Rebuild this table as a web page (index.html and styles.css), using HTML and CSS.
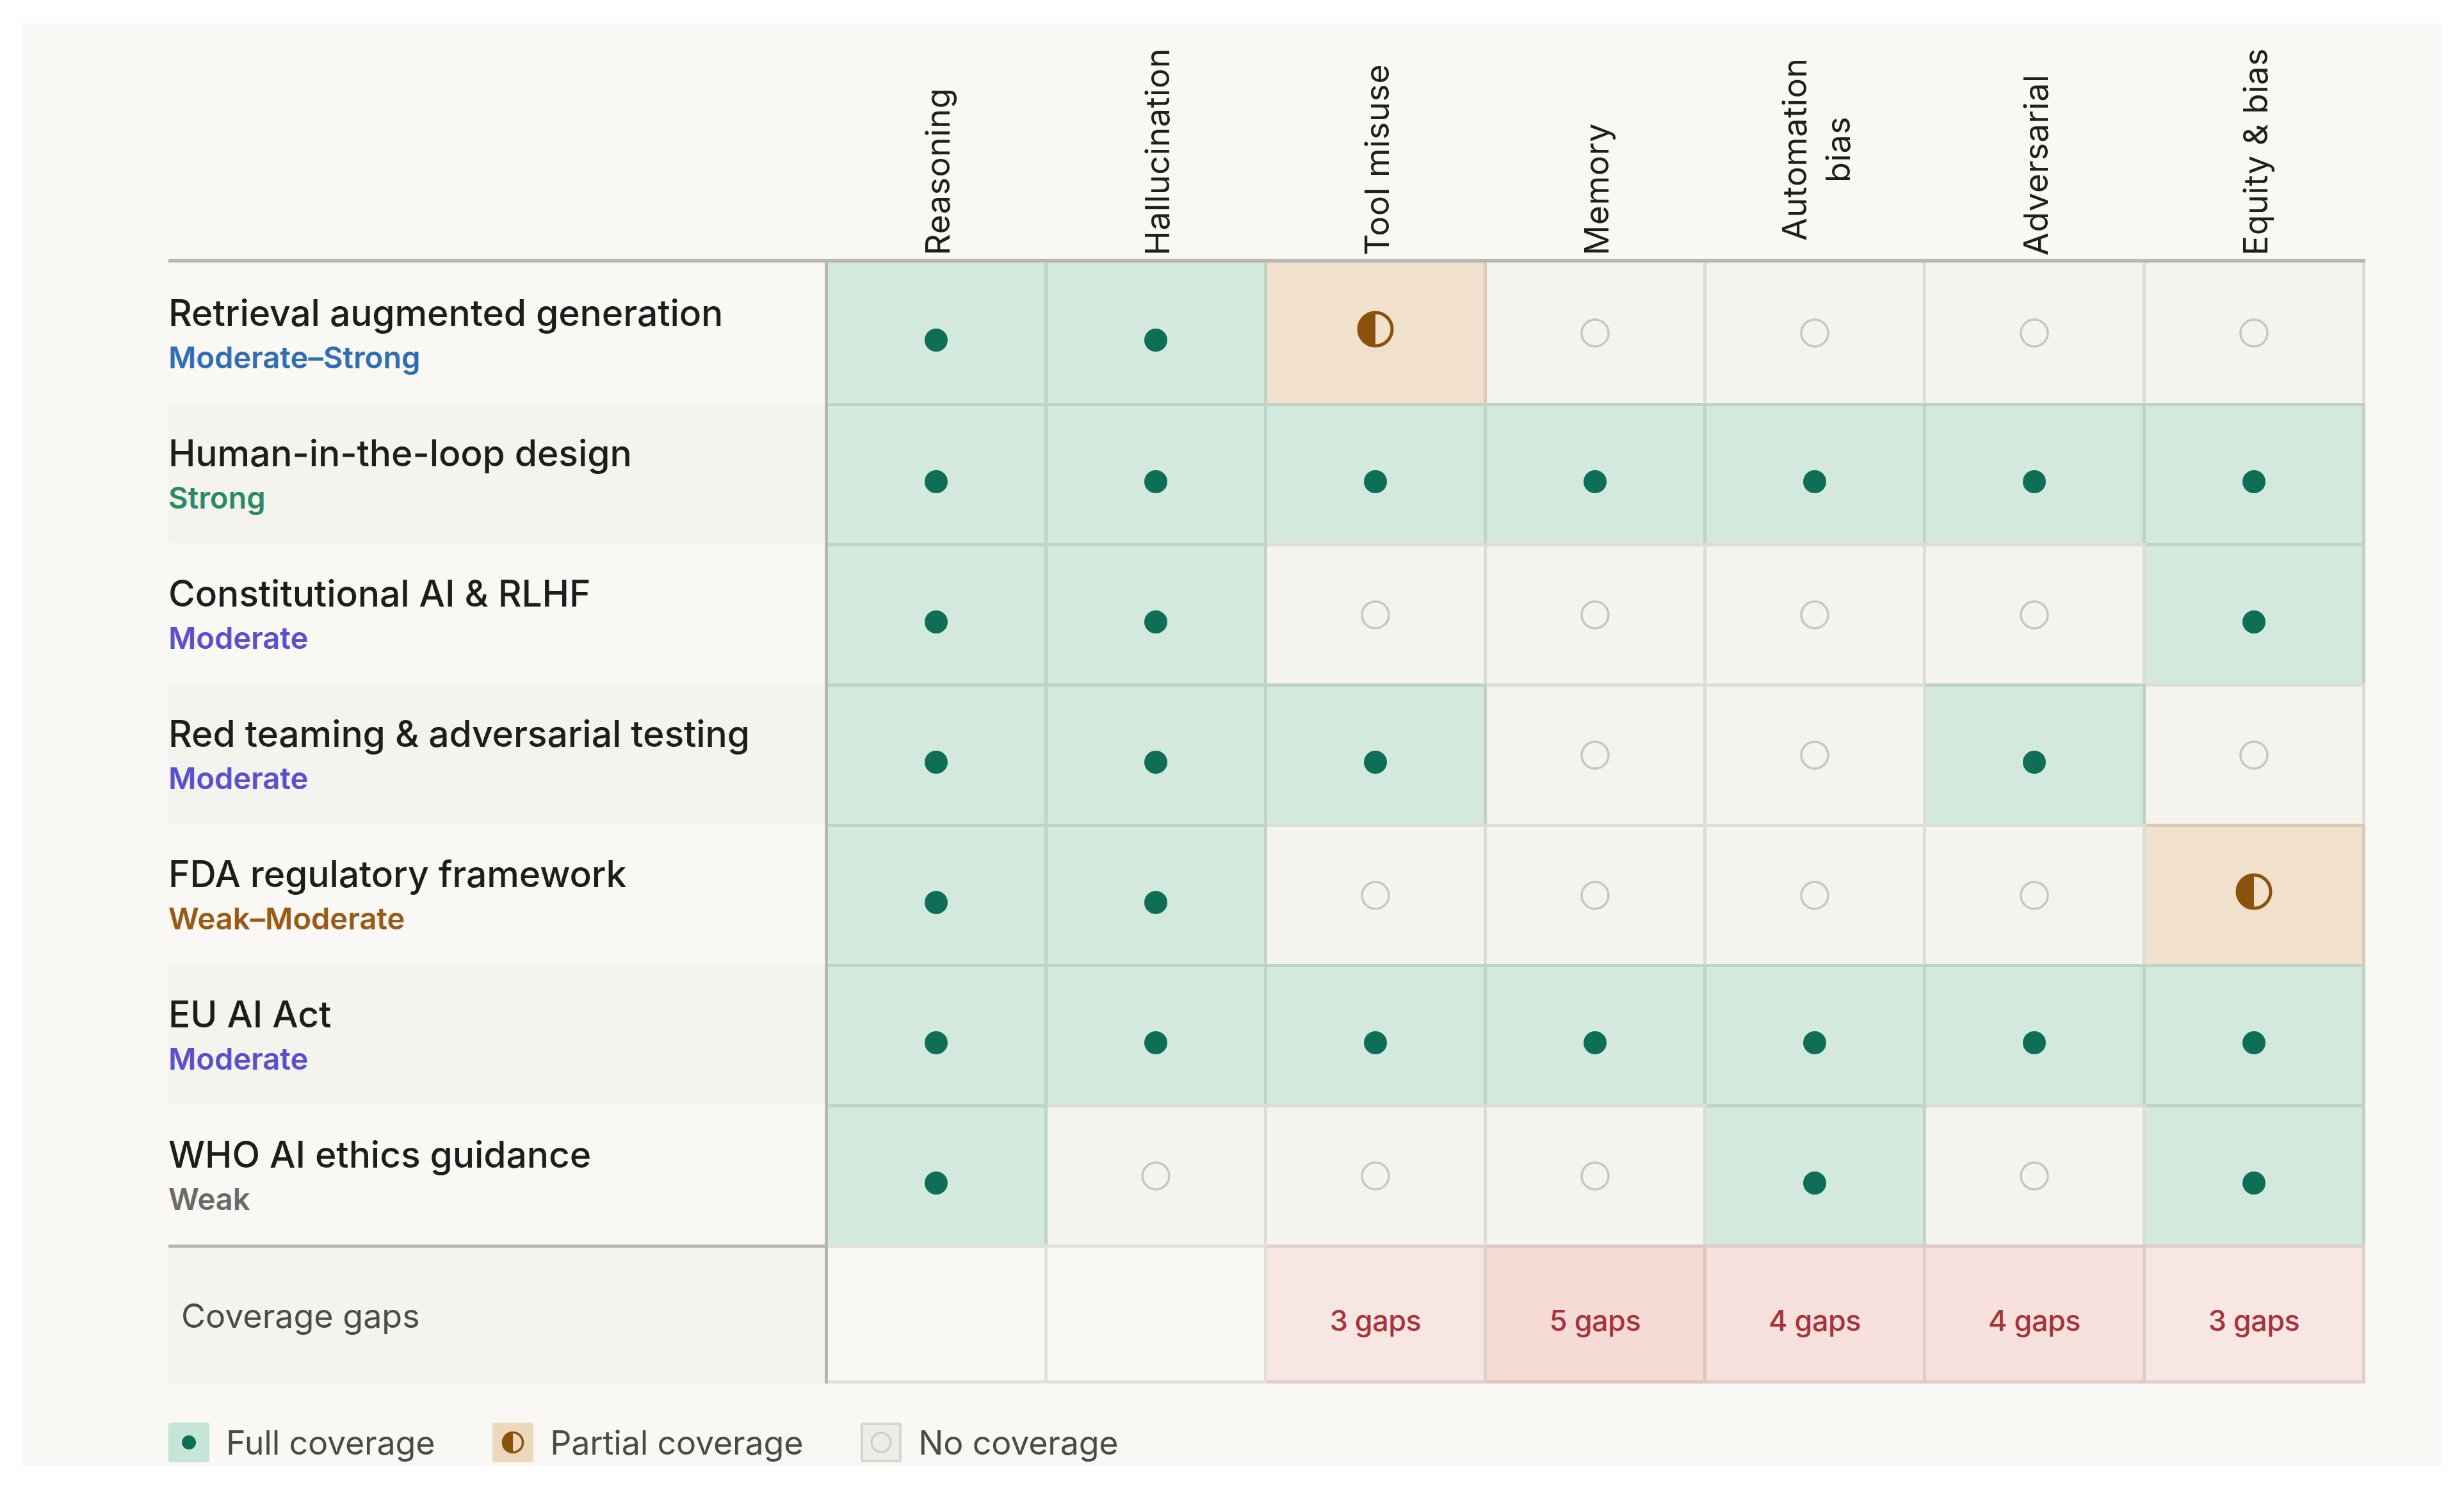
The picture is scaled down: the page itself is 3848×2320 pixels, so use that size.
FILE: index.html
```html
<!DOCTYPE html>
<html lang="en">
<head>
<meta charset="utf-8">
<title>Safeguard coverage matrix</title>
<link rel="stylesheet" href="styles.css">
</head>
<body>
<div class="card">
  <div class="head">
    <div class="hcell corner"></div>
    <div class="hcell"><span class="vlabel">Reasoning</span></div>
    <div class="hcell"><span class="vlabel">Hallucination</span></div>
    <div class="hcell"><span class="vlabel">Tool misuse</span></div>
    <div class="hcell"><span class="vlabel">Memory</span></div>
    <div class="hcell"><span class="vlabel">Automation bias</span></div>
    <div class="hcell"><span class="vlabel">Adversarial</span></div>
    <div class="hcell"><span class="vlabel">Equity &amp; bias</span></div>
  </div>

  <div class="row first">
    <div class="label"><div class="title">Retrieval augmented generation</div><div class="rating r-modstrong">Moderate–Strong</div></div>
    <div class="cell full"><svg class="dot" viewBox="0 0 36 36"><circle cx="18" cy="18" r="18"/></svg></div>
    <div class="cell full"><svg class="dot" viewBox="0 0 36 36"><circle cx="18" cy="18" r="18"/></svg></div>
    <div class="cell part"><svg class="half" viewBox="0 0 58 58"><circle cx="29" cy="29" r="26"/><path d="M29 3 A26 26 0 0 0 29 55 Z"/></svg></div>
    <div class="cell none"><svg class="ring" viewBox="0 0 46 46"><circle cx="23" cy="23" r="21"/></svg></div>
    <div class="cell none"><svg class="ring" viewBox="0 0 46 46"><circle cx="23" cy="23" r="21"/></svg></div>
    <div class="cell none"><svg class="ring" viewBox="0 0 46 46"><circle cx="23" cy="23" r="21"/></svg></div>
    <div class="cell none"><svg class="ring" viewBox="0 0 46 46"><circle cx="23" cy="23" r="21"/></svg></div>
  </div>

  <div class="row alt">
    <div class="label"><div class="title">Human-in-the-loop design</div><div class="rating r-strong">Strong</div></div>
    <div class="cell full"><svg class="dot" viewBox="0 0 36 36"><circle cx="18" cy="18" r="18"/></svg></div>
    <div class="cell full"><svg class="dot" viewBox="0 0 36 36"><circle cx="18" cy="18" r="18"/></svg></div>
    <div class="cell full"><svg class="dot" viewBox="0 0 36 36"><circle cx="18" cy="18" r="18"/></svg></div>
    <div class="cell full"><svg class="dot" viewBox="0 0 36 36"><circle cx="18" cy="18" r="18"/></svg></div>
    <div class="cell full"><svg class="dot" viewBox="0 0 36 36"><circle cx="18" cy="18" r="18"/></svg></div>
    <div class="cell full"><svg class="dot" viewBox="0 0 36 36"><circle cx="18" cy="18" r="18"/></svg></div>
    <div class="cell full"><svg class="dot" viewBox="0 0 36 36"><circle cx="18" cy="18" r="18"/></svg></div>
  </div>

  <div class="row">
    <div class="label"><div class="title">Constitutional AI &amp; RLHF</div><div class="rating r-mod">Moderate</div></div>
    <div class="cell full"><svg class="dot" viewBox="0 0 36 36"><circle cx="18" cy="18" r="18"/></svg></div>
    <div class="cell full"><svg class="dot" viewBox="0 0 36 36"><circle cx="18" cy="18" r="18"/></svg></div>
    <div class="cell none"><svg class="ring" viewBox="0 0 46 46"><circle cx="23" cy="23" r="21"/></svg></div>
    <div class="cell none"><svg class="ring" viewBox="0 0 46 46"><circle cx="23" cy="23" r="21"/></svg></div>
    <div class="cell none"><svg class="ring" viewBox="0 0 46 46"><circle cx="23" cy="23" r="21"/></svg></div>
    <div class="cell none"><svg class="ring" viewBox="0 0 46 46"><circle cx="23" cy="23" r="21"/></svg></div>
    <div class="cell full"><svg class="dot" viewBox="0 0 36 36"><circle cx="18" cy="18" r="18"/></svg></div>
  </div>

  <div class="row alt">
    <div class="label"><div class="title">Red teaming &amp; adversarial testing</div><div class="rating r-mod">Moderate</div></div>
    <div class="cell full"><svg class="dot" viewBox="0 0 36 36"><circle cx="18" cy="18" r="18"/></svg></div>
    <div class="cell full"><svg class="dot" viewBox="0 0 36 36"><circle cx="18" cy="18" r="18"/></svg></div>
    <div class="cell full"><svg class="dot" viewBox="0 0 36 36"><circle cx="18" cy="18" r="18"/></svg></div>
    <div class="cell none"><svg class="ring" viewBox="0 0 46 46"><circle cx="23" cy="23" r="21"/></svg></div>
    <div class="cell none"><svg class="ring" viewBox="0 0 46 46"><circle cx="23" cy="23" r="21"/></svg></div>
    <div class="cell full"><svg class="dot" viewBox="0 0 36 36"><circle cx="18" cy="18" r="18"/></svg></div>
    <div class="cell none"><svg class="ring" viewBox="0 0 46 46"><circle cx="23" cy="23" r="21"/></svg></div>
  </div>

  <div class="row">
    <div class="label"><div class="title">FDA regulatory framework</div><div class="rating r-weakmod">Weak–Moderate</div></div>
    <div class="cell full"><svg class="dot" viewBox="0 0 36 36"><circle cx="18" cy="18" r="18"/></svg></div>
    <div class="cell full"><svg class="dot" viewBox="0 0 36 36"><circle cx="18" cy="18" r="18"/></svg></div>
    <div class="cell none"><svg class="ring" viewBox="0 0 46 46"><circle cx="23" cy="23" r="21"/></svg></div>
    <div class="cell none"><svg class="ring" viewBox="0 0 46 46"><circle cx="23" cy="23" r="21"/></svg></div>
    <div class="cell none"><svg class="ring" viewBox="0 0 46 46"><circle cx="23" cy="23" r="21"/></svg></div>
    <div class="cell none"><svg class="ring" viewBox="0 0 46 46"><circle cx="23" cy="23" r="21"/></svg></div>
    <div class="cell part"><svg class="half" viewBox="0 0 58 58"><circle cx="29" cy="29" r="26"/><path d="M29 3 A26 26 0 0 0 29 55 Z"/></svg></div>
  </div>

  <div class="row alt">
    <div class="label"><div class="title">EU AI Act</div><div class="rating r-mod">Moderate</div></div>
    <div class="cell full"><svg class="dot" viewBox="0 0 36 36"><circle cx="18" cy="18" r="18"/></svg></div>
    <div class="cell full"><svg class="dot" viewBox="0 0 36 36"><circle cx="18" cy="18" r="18"/></svg></div>
    <div class="cell full"><svg class="dot" viewBox="0 0 36 36"><circle cx="18" cy="18" r="18"/></svg></div>
    <div class="cell full"><svg class="dot" viewBox="0 0 36 36"><circle cx="18" cy="18" r="18"/></svg></div>
    <div class="cell full"><svg class="dot" viewBox="0 0 36 36"><circle cx="18" cy="18" r="18"/></svg></div>
    <div class="cell full"><svg class="dot" viewBox="0 0 36 36"><circle cx="18" cy="18" r="18"/></svg></div>
    <div class="cell full"><svg class="dot" viewBox="0 0 36 36"><circle cx="18" cy="18" r="18"/></svg></div>
  </div>

  <div class="row">
    <div class="label"><div class="title">WHO AI ethics guidance</div><div class="rating r-weak">Weak</div></div>
    <div class="cell full"><svg class="dot" viewBox="0 0 36 36"><circle cx="18" cy="18" r="18"/></svg></div>
    <div class="cell none"><svg class="ring" viewBox="0 0 46 46"><circle cx="23" cy="23" r="21"/></svg></div>
    <div class="cell none"><svg class="ring" viewBox="0 0 46 46"><circle cx="23" cy="23" r="21"/></svg></div>
    <div class="cell none"><svg class="ring" viewBox="0 0 46 46"><circle cx="23" cy="23" r="21"/></svg></div>
    <div class="cell full"><svg class="dot" viewBox="0 0 36 36"><circle cx="18" cy="18" r="18"/></svg></div>
    <div class="cell none"><svg class="ring" viewBox="0 0 46 46"><circle cx="23" cy="23" r="21"/></svg></div>
    <div class="cell full"><svg class="dot" viewBox="0 0 36 36"><circle cx="18" cy="18" r="18"/></svg></div>
  </div>

  <div class="row gaps">
    <div class="label gaps-label">Coverage gaps</div>
    <div class="gcell"></div>
    <div class="gcell"></div>
    <div class="gcell g3">3 gaps</div>
    <div class="gcell g5">5 gaps</div>
    <div class="gcell g4">4 gaps</div>
    <div class="gcell g4">4 gaps</div>
    <div class="gcell g3">3 gaps</div>
  </div>

  <div class="legend">
    <div class="litem">
      <span class="swatch sw-full"><svg viewBox="0 0 22 22" class="sw-dot"><circle cx="11" cy="11" r="11"/></svg></span>
      <span class="ltext">Full coverage</span>
    </div>
    <div class="litem">
      <span class="swatch sw-part"><svg viewBox="0 0 36 36" class="sw-half"><circle cx="18" cy="18" r="15.5"/><path d="M18 2.5 A15.5 15.5 0 0 0 18 33.5 Z"/></svg></span>
      <span class="ltext">Partial coverage</span>
    </div>
    <div class="litem">
      <span class="swatch sw-none"><svg viewBox="0 0 34 34" class="sw-ring"><circle cx="17" cy="17" r="15"/></svg></span>
      <span class="ltext">No coverage</span>
    </div>
  </div>
</div>
</body>
</html>
```

FILE: styles.css
```css
* { box-sizing: border-box; }

html, body {
  margin: 0;
  padding: 0;
  background: #ffffff;
}

body {
  font-family: Inter, "Noto Sans", "Liberation Sans", sans-serif;
  color: #1d1d1b;
}

.card {
  margin: 36px 0 0 34px;
  width: 3778px;
  height: 2253px;
  padding: 0 0 0 229px;
  background: #f9f8f4;
}

/* ---------- header ---------- */
.head {
  display: grid;
  grid-template-columns: 1030px repeat(7, 343px);
  width: 3431px;
  height: 374px;
  border-bottom: 6px solid #bbb8b2;
}

.hcell {
  display: flex;
  align-items: flex-end;
  justify-content: center;
  padding-bottom: 5px;
}

.vlabel {
  display: inline-block;
  writing-mode: vertical-rl;
  transform: rotate(180deg);
  max-height: 332px;
  text-align: center;
  font-size: 52px;
  line-height: 1.3;
  letter-spacing: 0.5px;
  font-weight: 400;
  color: #1f1f1d;
}

/* ---------- rows ---------- */
.row {
  display: grid;
  grid-template-columns: 1030px repeat(7, 343px);
  width: 3431px;
  height: 219px;
}

.label {
  display: flex;
  flex-direction: column;
  justify-content: center;
  border-right: 5px solid #b9b6b1;
}

.row.alt .label { background: #f4f3ee; }

.title {
  font-size: 57px;
  line-height: 66px;
  font-weight: 500;
  letter-spacing: -0.1px;
  color: #1d1d1b;
  white-space: nowrap;
}

.rating {
  margin-top: 10px;
  font-size: 47px;
  line-height: 52px;
  font-weight: 600;
  letter-spacing: 0;
}

.r-modstrong { color: #2f6db4; }
.r-strong { color: #2a8a66; }
.r-mod { color: #5a4fcd; }
.r-weakmod { color: #985a14; }
.r-weak { color: #6a6a68; }

.cell {
  display: flex;
  flex-direction: column;
  align-items: center;
  justify-content: center;
  border-top: 5px solid rgba(40, 40, 30, 0.11);
  border-right: 5px solid rgba(40, 40, 30, 0.11);
}

.row.first .cell { border-top: 0; }

.cell.full { background: #d3e9dd; }
.cell.part { background: #f0e0cc; }
.cell.none { background: #f4f3ef; }

.dot {
  width: 36px;
  height: 36px;
  margin-top: 22px;
}
.dot circle { fill: #0f6e56; }

.ring {
  width: 46px;
  height: 46px;
}
.ring circle {
  fill: none;
  stroke: #c8c6c1;
  stroke-width: 3.5;
}

.half {
  width: 58px;
  height: 58px;
  margin-bottom: 12px;
}
.half circle {
  fill: none;
  stroke: #8a520c;
  stroke-width: 5;
}
.half path { fill: #8a520c; }

/* ---------- gaps row ---------- */
.row.gaps { height: 217px; }

.gaps-label {
  background: #f4f3ee;
  border-top: 5px solid #b9b6b1;
  padding-left: 20px;
  font-size: 52px;
  font-weight: 400;
  color: #4b4b49;
}

.gcell {
  display: flex;
  align-items: center;
  justify-content: center;
  padding-top: 20px;
  border-top: 5px solid rgba(40, 40, 30, 0.11);
  border-bottom: 5px solid rgba(40, 40, 30, 0.11);
  border-right: 5px solid rgba(40, 40, 30, 0.11);
  font-size: 45px;
  font-weight: 500;
  letter-spacing: -0.5px;
  color: #a8323a;
}

.gcell.g3 { background: #f8e6e3; }
.gcell.g4 { background: #f7e1dd; }
.gcell.g5 { background: #f5dad6; }

/* ---------- legend ---------- */
.legend {
  display: flex;
  align-items: center;
  gap: 90px;
  margin-top: 61px;
  height: 62px;
}

.litem {
  display: flex;
  align-items: center;
  gap: 26px;
}

.swatch {
  display: flex;
  align-items: center;
  justify-content: center;
  width: 64px;
  height: 62px;
  border-radius: 4px;
}

.sw-full { background: #c5e6d6; }
.sw-part { background: #ecd8bd; }
.sw-none {
  background: #edece8;
  border: 4px solid #d7d5d0;
}

.sw-dot { width: 22px; height: 22px; }
.sw-dot circle { fill: #0f6e56; }

.sw-half { width: 36px; height: 36px; }
.sw-half circle { fill: none; stroke: #8a520c; stroke-width: 3.5; }
.sw-half path { fill: #8a520c; }

.sw-ring { width: 34px; height: 34px; }
.sw-ring circle { fill: none; stroke: #cfcdc8; stroke-width: 3; }

.ltext {
  font-size: 52px;
  font-weight: 400;
  color: #4a4a48;
  letter-spacing: -0.2px;
}
```
